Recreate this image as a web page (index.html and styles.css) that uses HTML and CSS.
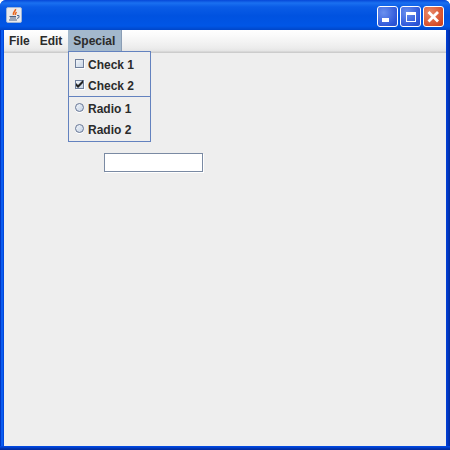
FILE: index.html
```html
<!DOCTYPE html>
<html lang="en">
<head>
    <meta charset="UTF-8">
    <title>Menu demo</title>
    <link rel="stylesheet" href="styles.css">
</head>
<body>
    <div class="window">
        <div class="titlebar">
            <div class="app-icon">
                <svg width="16" height="16" viewBox="0 0 16 16">
                    <rect x="0.5" y="0.5" width="15" height="15" rx="1.5" fill="#e9e9ec" stroke="#9db4d8"/>
                    <path d="M9.5 2 C10 4 6.5 5 7.5 8 M10.5 5 C9.5 6 9 6.5 9.5 8" fill="none" stroke="#e8661e" stroke-width="1.6"/>
                    <path d="M3.5 9.5 H10 M4 11 H10 M3 13 H11" stroke="#4c6284" stroke-width="1"/>
                    <path d="M11 8.5 H13 V10.5 L11 11.5" fill="none" stroke="#4c6a94" stroke-width="1"/>
                </svg>
            </div>
            <div class="win-buttons">
                <div class="win-btn">
                    <svg width="21" height="21" viewBox="0 0 21 21"><rect x="5" y="12" width="7" height="4" fill="#fff"/></svg>
                </div>
                <div class="win-btn">
                    <svg width="21" height="21" viewBox="0 0 21 21"><rect x="6.5" y="6.5" width="9" height="9" fill="none" stroke="#fff"/><rect x="6" y="6" width="10" height="3" fill="#fff"/></svg>
                </div>
                <div class="win-btn win-close">
                    <svg width="21" height="21" viewBox="0 0 21 21"><path d="M5.5 6 L15 15.5 M15 6 L5.5 15.5" stroke="#fff" stroke-width="2.8"/></svg>
                </div>
            </div>
        </div>
        <div class="client">
            <div class="menubar">
                <div class="menu">File</div>
                <div class="menu">Edit</div>
                <div class="menu menu-open">Special</div>
            </div>
            <div class="content">
                <input class="field" type="text">
            </div>
            <div class="popup">
                <div class="group">
                    <div class="item">
                        <span class="check"></span>Check 1
                    </div>
                    <div class="item">
                        <span class="check">
                            <svg width="9" height="9" viewBox="0 0 9 9"><path d="M1 3 L3 5 L8 0 L8 3 L3 8 L1 6 Z" fill="#222"/></svg>
                        </span>Check 2
                    </div>
                </div>
                <div class="separator"></div>
                <div class="group">
                    <div class="item">
                        <span class="radio"></span>Radio 1
                    </div>
                    <div class="item">
                        <span class="radio"></span>Radio 2
                    </div>
                </div>
            </div>
        </div>
    </div>
</body>
</html>
```

FILE: styles.css
```css
html, body {
    margin: 0;
    padding: 0;
}

body {
    width: 450px;
    height: 450px;
    overflow: hidden;
    font-family: "Liberation Sans", Arial, sans-serif;
    font-size: 12px;
    font-weight: bold;
    color: #2b2b2b;
}

.window {
    box-sizing: border-box;
    width: 450px;
    height: 450px;
    display: flex;
    flex-direction: column;
    padding: 0 4px 4px 4px;
    background: linear-gradient(90deg, #0036c4 0, #0036c4 1px, #0a5cf0 1px, #0a5cf0 3px, #0048dc 3px, #0048dc 446px, #0040d8 446px, #0036c0 448px, #002a9c 450px);
    border-radius: 6px 6px 0 0;
    position: relative;
}

.window::after {
    content: "";
    position: absolute;
    left: 0;
    right: 0;
    bottom: 0;
    height: 4px;
    background: linear-gradient(180deg, #0048e0 0, #0048e0 1px, #0036b8 2px, #002a9c 4px);
}

.titlebar {
    box-sizing: border-box;
    height: 30px;
    display: flex;
    align-items: flex-start;
    justify-content: space-between;
    margin: 0 -4px;
    padding: 6px 6px 0 6px;
    background: linear-gradient(180deg, #0648d8 0, #1a70f0 3px, #0a5ce6 7px, #0052e0 16px, #0056e6 26px, #0046c8 30px);
    border-radius: 6px 6px 0 0;
}

.app-icon {
    width: 16px;
    height: 16px;
    margin-top: 1px;
    display: flex;
}

.win-buttons {
    display: flex;
    gap: 2px;
}

.win-btn {
    box-sizing: border-box;
    width: 21px;
    height: 21px;
    border: 1px solid #ffffff;
    border-radius: 3px;
    background: radial-gradient(circle at 30% 30%, #6a90ee, #2c55d8 75%, #2a4fc8);
    display: flex;
    align-items: center;
    justify-content: center;
}

.win-btn svg {
    margin: -1px;
    flex: none;
}

.win-close {
    background: radial-gradient(circle at 30% 30%, #e88a6a, #d8502c 70%, #c43c1c);
}

.client {
    position: relative;
    flex: 1;
    display: flex;
    flex-direction: column;
    background: #eeeeee;
}

.menubar {
    box-sizing: border-box;
    height: 23px;
    display: flex;
    background: linear-gradient(180deg, #ffffff 0, #fafafa 6px, #ececec 18px, #e4e4e4 21px, #cccccc 22px);
    border-bottom: 1px solid #cccccc;
}

.menu {
    padding: 0 5px;
    line-height: 22px;
}

.menu:nth-child(2) {
    padding-right: 6px;
}

.menu-open {
    box-sizing: border-box;
    width: 54px;
    height: 22px;
    background: #a3b8cc;
    border-right: 1px solid #8a9db5;
}

.content {
    flex: 1;
    padding: 100px 0 0 100px;
}

.field {
    display: block;
    box-sizing: border-box;
    width: 99px;
    height: 19px;
    margin: 0;
    padding: 0;
    background: #ffffff;
    border: 1px solid #7a8aa3;
    box-shadow: 1px 1px 0 #ffffff;
    outline: none;
}

.popup {
    position: absolute;
    left: 64px;
    top: 21px;
    box-sizing: border-box;
    width: 83px;
    height: 91px;
    background: #eeeeee;
    border: 1px solid #6382bf;
    display: flex;
    flex-direction: column;
    padding-top: 2px;
}

.item {
    height: 21px;
    display: flex;
    align-items: center;
    padding-left: 6px;
}

.separator {
    height: 1px;
    margin-bottom: 1px;
    background: #6382bf;
}

.check {
    box-sizing: border-box;
    width: 9px;
    height: 9px;
    margin: 0 4px 2px 0;
    display: flex;
    border: 1px solid #6f7f9c;
    background: linear-gradient(135deg, #f2f5f9, #c6d4e6);
    box-shadow: 1px 1px 0 #ffffff;
}

.check svg {
    margin: -1px;
    flex: none;
}

.radio {
    box-sizing: border-box;
    width: 9px;
    height: 9px;
    margin: 0 4px 2px 0;
    border: 1px solid #667696;
    border-radius: 50%;
    background: linear-gradient(135deg, #f4f6fa, #c2d1e4);
    box-shadow: 0 1px 0 #ffffff;
}
```
